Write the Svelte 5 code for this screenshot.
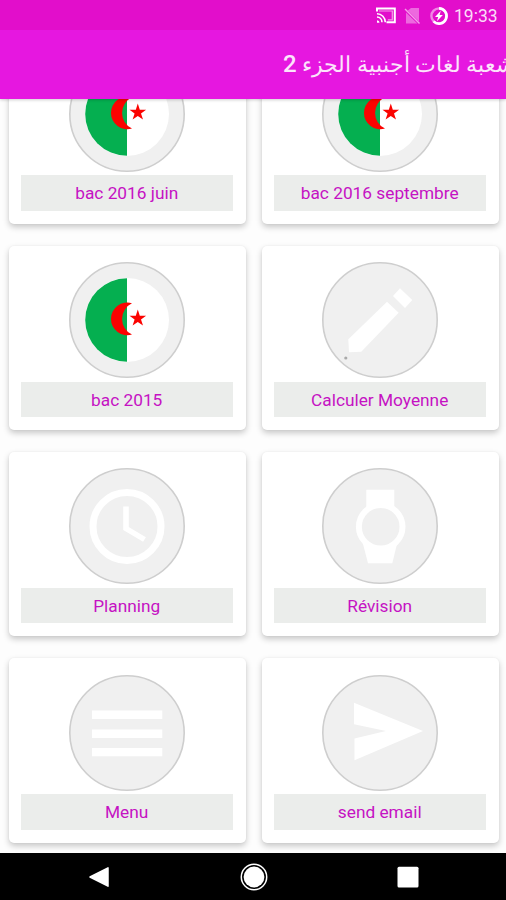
<script lang="ts">
	const cards = [
		{ label: 'bac 2016 juin', icon: 'flag' },
		{ label: 'bac 2016 septembre', icon: 'flag' },
		{ label: 'bac 2015', icon: 'flag' },
		{ label: 'Calculer Moyenne', icon: 'pencil' },
		{ label: 'Planning', icon: 'clock' },
		{ label: 'Révision', icon: 'watch' },
		{ label: 'Menu', icon: 'menu' },
		{ label: 'send email', icon: 'send' }
	];
</script>

<div class="screen">
	<header>
		<div class="status">
			<svg width="20" height="17" viewBox="0 0 20 17" fill="none" stroke="#fff">
				<path d="M1 4.5V1.4h17.8v13.8H10.5" stroke-width="2" />
				<path d="M3.5 4.5V4h12.8v8.8h-4.5" stroke-width="1.2" opacity="0.6" />
				<path d="M1 6.7a8.5 8.5 0 0 1 8.3 8.5M1 10a5.3 5.3 0 0 1 5 5.2" stroke-width="1.6" />
				<path d="M1 15.8v-2.6a2.6 2.6 0 0 1 2.5 2.6z" fill="#fff" stroke="none" />
			</svg>
			<svg class="sim" width="17" height="18" viewBox="0 0 17 18">
				<path d="M7 1h8v13.5L3.8 3.5z" fill="#fff" opacity="0.38" />
				<path d="M2 5.5 13.4 16.5H2z" fill="#fff" opacity="0.38" />
				<path d="M1 2 15.5 16.5" stroke="#fff" stroke-width="1.4" opacity="0.6" />
			</svg>
			<svg class="battery" width="20" height="20" viewBox="0 0 20 20" fill="none">
				<circle cx="10" cy="10" r="7.6" stroke="#fff" stroke-width="2.4" opacity="0.5" />
				<path d="M10 2.4a7.6 7.6 0 1 1-5.4 13" stroke="#fff" stroke-width="2.6" />
				<path d="M11.8 4.8 6 10.9h3.2l-1.3 4.4 6-6.3h-3.3z" fill="#fff" />
			</svg>
			<span class="time">19:33</span>
		</div>
		<div class="toolbar">
			<h1 dir="rtl" lang="ar">شعبة لغات أجنبية الجزء <b>2</b></h1>
		</div>
	</header>

	<main>
		{#each cards as card}
			<div class="card">
				<svg class="icon" viewBox="0 0 116 116">
					<circle cx="58" cy="58" r="57.2" fill="#f0f0f0" stroke="#cecece" stroke-width="1.6" />
					{#if card.icon === 'flag'}
						<circle cx="58" cy="58" r="42" fill="#fff" />
						<path d="M58 16.2a41.8 41.8 0 0 0 0 83.6z" fill="#05af50" />
						<path d="M63 41.3a16.3 16.3 0 1 0 0 31.2a17.2 17.2 0 0 1 0-31.2z" fill="#fb0300" />
						<path d="M68.8 47.6l2 6.1h6.3l-5.1 3.8 2 6.1-5.2-3.7-5.2 3.7 2-6.1-5.1-3.8h6.3z" fill="#fb0300" />
					{:else if card.icon === 'pencil'}
						<path d="M78 26.3 90.3 38 83 46 71 34zM65 39.7 76.7 50.7 39.3 89.7 27 90.3 26.3 77.3z" fill="#fff" />
						<circle cx="23.8" cy="96" r="1.6" fill="#aaa" />
					{:else if card.icon === 'clock'}
						<circle cx="58" cy="58.5" r="34" fill="none" stroke="#fff" stroke-width="7" />
						<path d="M57 38.5v22L75.5 71.5" fill="none" stroke="#fff" stroke-width="5.5" />
					{:else if card.icon === 'watch'}
						<path d="M44.3 21.7h28V42h-28zM41 76h34l-4.7 19.3H46z" fill="#fff" />
						<circle cx="58.7" cy="58.7" r="21.8" fill="#f0f0f0" stroke="#fff" stroke-width="6" />
					{:else if card.icon === 'menu'}
						<path d="M23 35.5h70.3v8.5H23zM23 54.5h70.3V63H23zM23 73h70.3v8.3H23z" fill="#fff" />
					{:else}
						<path d="M32 27.7 101 56 32.5 85.3V63.5L64 56 32 49.3z" fill="#fff" />
					{/if}
				</svg>
				<div class="label">{card.label}</div>
			</div>
		{/each}
	</main>

	<nav>
		<svg width="22" height="22" viewBox="0 0 22 22"><path d="M20 1.8v18.4L2 11z" fill="#fff" stroke="#fff" stroke-width="1.5" stroke-linejoin="round" /></svg>
		<svg width="28" height="28" viewBox="0 0 28 28">
			<circle cx="14" cy="14" r="12.7" fill="none" stroke="#fff" stroke-width="1.5" />
			<circle cx="14" cy="14" r="10.4" fill="#fff" />
		</svg>
		<svg width="22" height="22" viewBox="0 0 22 22"><rect x="0.5" y="0.7" width="21" height="20.8" rx="1.5" fill="#fff" /></svg>
	</nav>
</div>

<style>
	:global(body) {
		margin: 0;
	}

	.screen {
		display: flex;
		flex-direction: column;
		width: 506px;
		height: 900px;
		overflow: hidden;
		background: #fdfdfd;
		font-family: Roboto, 'Noto Sans', sans-serif;
	}

	header {
		flex: none;
		z-index: 1;
		background: #e617e0;
		box-shadow: 0 1px 3px rgba(0, 0, 0, 0.2);
	}

	.status {
		display: flex;
		align-items: center;
		justify-content: flex-end;
		height: 30px;
		padding: 1px 9px 0 0;
		box-sizing: border-box;
		background: #e20ecb;
		color: #fbdcf8;
	}

	.sim {
		margin-left: 8px;
	}

	.battery {
		margin: 0 5px 0 8px;
	}

	.time {
		width: 43px;
		font-size: 17.5px;
		line-height: 30px;
		text-align: right;
		white-space: nowrap;
	}

	.toolbar {
		display: flex;
		align-items: center;
		height: 68.5px;
		padding-left: 283px;
		overflow: hidden;
	}

	h1 {
		flex: none;
		margin: 0;
		font-size: 22px;
		font-weight: 400;
		line-height: 40px;
		white-space: nowrap;
		color: #fce4fb;
	}

	h1 b {
		font-size: 24px;
		font-weight: 500;
	}

	main {
		flex: 1;
		min-height: 0;
		display: grid;
		grid-template-columns: 237px 237px;
		grid-auto-rows: 184.3px;
		align-content: end;
		gap: 22px 16px;
		padding: 0 0 10.5px 8.5px;
		overflow: hidden;
	}

	.card {
		display: flex;
		flex-direction: column;
		align-items: center;
		box-sizing: border-box;
		padding: 16.3px 13px 0 12.4px;
		border-radius: 5px;
		background: #fff;
		box-shadow: 0 3px 6px rgba(0, 0, 0, 0.22), 0 0 2px rgba(0, 0, 0, 0.05);
	}

	.icon {
		flex: none;
		width: 116px;
		height: 116px;
	}

	.label {
		width: 100%;
		height: 35.7px;
		margin-top: 3.6px;
		background: #ebedeb;
		color: #c512c3;
		font-size: 17.3px;
		line-height: 37px;
		text-align: center;
	}

	nav {
		flex: none;
		display: flex;
		align-items: center;
		justify-content: space-between;
		height: 47px;
		padding: 1px 87px 0 88px;
		box-sizing: border-box;
		background: #000;
	}
</style>
